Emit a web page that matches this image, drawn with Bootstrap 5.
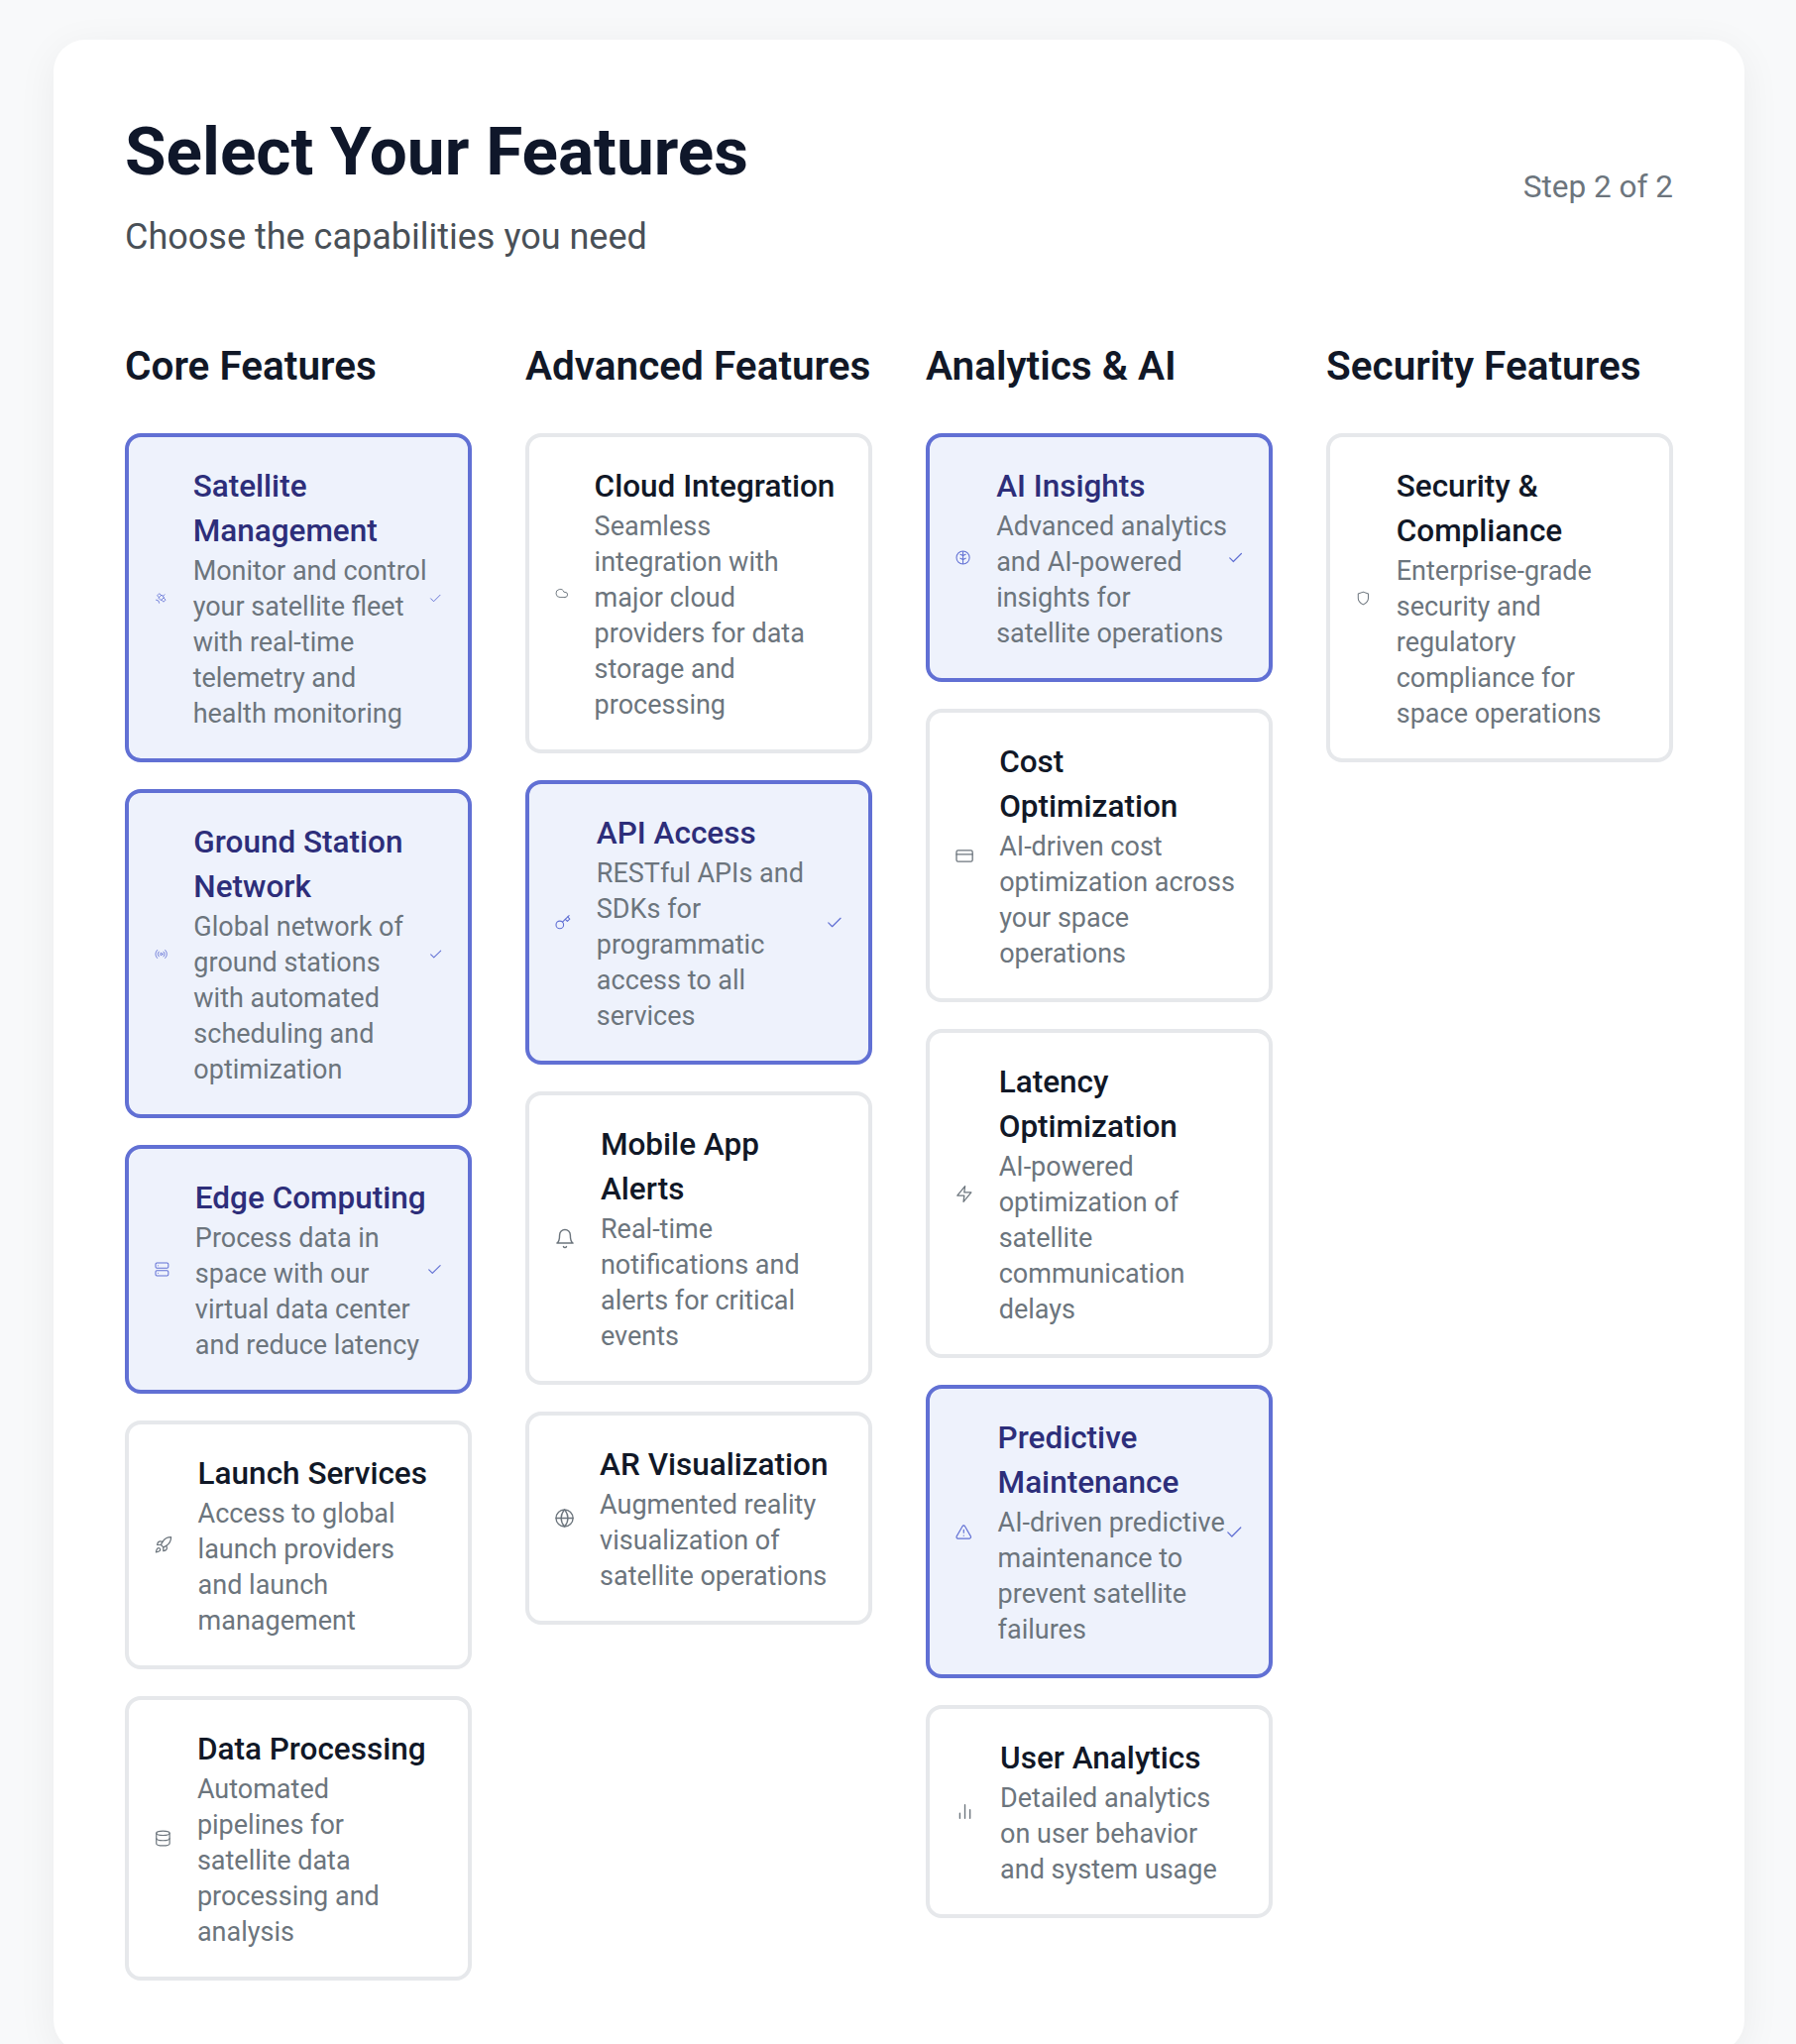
<!DOCTYPE html>
<html lang="en">
<head>
<meta charset="utf-8">
<title>Select Your Features</title>
<link href="https://cdn.jsdelivr.net/npm/bootstrap@5.3.0/dist/css/bootstrap.min.css" rel="stylesheet">
<style>
html, body { height: 2062px; overflow: hidden; }
body { background: #f8f9fa; font-family: Roboto, "Liberation Sans", sans-serif; }
.wizard-panel { margin: 40px 52px 0 54px; padding: 72px; background: #fff; border-radius: 32px; box-shadow: 0 8px 40px rgba(0,0,0,.06); }
.wizard-title { font-size: 67.5px; font-weight: 700; line-height: 81px; color: #0f172a; margin: 0 0 19px; }
.wizard-sub { font-size: 36px; line-height: 54px; color: #495057; margin: 0; }
.wizard-step { font-size: 31.5px; color: #6c757d; }
.wizard-head { margin-bottom: 79px; }
.col-title { font-size: 40.5px; font-weight: 600; line-height: 48px; color: #111827; margin: 0 0 44px; }
.wizard-cols { --bs-gutter-x: 54px; }
.gap-feat { gap: 27px; }
.feat { border: 4px solid #e6e8eb; border-radius: 16px; padding: 27px; background: #fff; }
.feat-on { border-color: #6170d4; background: #eef2fc; }
.feat-icon { width: 45px; min-width: 0; height: 45px; color: #6c757d; margin-right: 27px; }
.feat-on .feat-icon { color: #6170d4; }
.feat-check { width: 45px; min-width: 0; height: 45px; color: #6170d4; }
.feat-name { font-size: 31.5px; font-weight: 500; line-height: 45px; color: #111827; margin: 0; }
.feat-on .feat-name { color: #2d2e7a; }
.feat-desc { font-size: 27px; line-height: 36px; color: #6c757d; margin: 0; }
.ic { fill: none; stroke: currentColor; stroke-width: 1.6; stroke-linecap: round; stroke-linejoin: round; overflow: visible; }
symbol { overflow: visible; }
</style>
</head>
<body>
<svg width="0" height="0" class="position-absolute">
<defs>
<symbol id="i-sat" viewBox="2 2 20 20"><path d="M13 7 9 3 5 7l4 4"/><path d="m17 11 4 4-4 4-4-4"/><path d="m8 12 4 4 6-6-4-4Z"/><path d="m16 8 3-3"/><path d="M9 21a6 6 0 0 0-6-6"/></symbol>
<symbol id="i-radio" viewBox="2 2 20 20"><path d="M4.9 19.1C1 15.2 1 8.8 4.9 4.9"/><path d="M7.8 16.2c-2.3-2.3-2.3-6.1 0-8.5"/><circle cx="12" cy="12" r="2"/><path d="M16.2 7.8c2.3 2.3 2.3 6.1 0 8.5"/><path d="M19.1 4.9C23 8.8 23 15.1 19.1 19"/></symbol>
<symbol id="i-server" viewBox="2 2 20 20"><rect x="2" y="2" width="20" height="8" rx="2"/><rect x="2" y="14" width="20" height="8" rx="2"/><path d="M6 6h.01M6 18h.01"/></symbol>
<symbol id="i-rocket" viewBox="2 2 20 20"><path d="M4.5 16.5c-1.5 1.26-2 5-2 5s3.74-.5 5-2c.71-.84.7-2.13-.09-2.91a2.18 2.18 0 0 0-2.91-.09z"/><path d="m12 15-3-3a22 22 0 0 1 2-3.95A12.88 12.88 0 0 1 22 2c0 2.72-.78 7.5-6 11a22.35 22.35 0 0 1-4 2z"/><path d="M9 12H4s.55-3.03 2-4c1.62-1.08 5 0 5 0"/><path d="M12 15v5s3.03-.55 4-2c1.08-1.62 0-5 0-5"/></symbol>
<symbol id="i-db" viewBox="2 2 20 20"><ellipse cx="12" cy="5" rx="9" ry="3"/><path d="M3 5v14a9 3 0 0 0 18 0V5"/><path d="M3 12a9 3 0 0 0 18 0"/></symbol>
<symbol id="i-cloud" viewBox="2 2 20 20"><path d="M17.5 19H9a7 7 0 1 1 6.71-9h1.79a4.5 4.5 0 1 1 0 9Z"/></symbol>
<symbol id="i-key" viewBox="2 2 20 20"><circle cx="7.5" cy="15.5" r="5.5"/><path d="m21 2-9.6 9.6"/><path d="m15.5 7.5 3 3L22 7l-3-3"/></symbol>
<symbol id="i-bell" viewBox="2 2 20 20"><path d="M6 8a6 6 0 0 1 12 0c0 7 3 9 3 9H3s3-2 3-9"/><path d="M10.3 21a1.94 1.94 0 0 0 3.4 0"/></symbol>
<symbol id="i-globe" viewBox="2 2 20 20"><circle cx="12" cy="12" r="10"/><path d="M2 12h20"/><path d="M12 2a15.3 15.3 0 0 1 4 10 15.3 15.3 0 0 1-4 10 15.3 15.3 0 0 1-4-10 15.3 15.3 0 0 1 4-10z"/></symbol>
<symbol id="i-brain" viewBox="2 2 20 20"><circle cx="12" cy="12" r="10"/><path d="M12 3v18"/><path d="M12 9 8 7M12 9l4-2M12 15l-4-2M12 15l4-2"/></symbol>
<symbol id="i-card" viewBox="2 2 20 20"><rect x="2" y="5" width="20" height="14" rx="2"/><path d="M2 10h20"/></symbol>
<symbol id="i-zap" viewBox="2 2 20 20"><path d="M13 2 3 14h9l-1 8 10-12h-9l1-8z"/></symbol>
<symbol id="i-alert" viewBox="2 2 20 20"><path d="m21.73 18-8-14a2 2 0 0 0-3.48 0l-8 14A2 2 0 0 0 4 21h16a2 2 0 0 0 1.73-3Z"/><path d="M12 9v4M12 17h.01"/></symbol>
<symbol id="i-bars" viewBox="2 2 20 20"><path d="M18 20V10M12 20V4M6 20v-6"/></symbol>
<symbol id="i-shield" viewBox="2 2 20 20"><path d="M12 22s8-4 8-10V5l-8-3-8 3v7c0 6 8 10 8 10z"/></symbol>
<symbol id="i-check" viewBox="3 2.5 18 18"><path d="M20 6 9 17l-5-5"/></symbol>
</defs>
</svg>

<main class="wizard-panel">
  <header class="wizard-head d-flex justify-content-between align-items-center">
    <div>
      <h1 class="wizard-title">Select Your Features</h1>
      <p class="wizard-sub">Choose the capabilities you need</p>
    </div>
    <span class="wizard-step">Step 2 of 2</span>
  </header>

  <div class="row wizard-cols">
    <section class="col-3">
      <h2 class="col-title">Core Features</h2>
      <div class="d-flex flex-column gap-feat">
        <div class="feat feat-on d-flex align-items-center"><svg class="feat-icon ic"><use href="#i-sat"/></svg><div><h3 class="feat-name">Satellite Management</h3><p class="feat-desc">Monitor and control your satellite fleet with real-time telemetry and health monitoring</p></div><svg class="feat-check ic"><use href="#i-check"/></svg></div>
        <div class="feat feat-on d-flex align-items-center"><svg class="feat-icon ic"><use href="#i-radio"/></svg><div><h3 class="feat-name">Ground Station Network</h3><p class="feat-desc">Global network of ground stations with automated scheduling and optimization</p></div><svg class="feat-check ic"><use href="#i-check"/></svg></div>
        <div class="feat feat-on d-flex align-items-center"><svg class="feat-icon ic"><use href="#i-server"/></svg><div><h3 class="feat-name">Edge Computing</h3><p class="feat-desc">Process data in space with our virtual data center and reduce latency</p></div><svg class="feat-check ic"><use href="#i-check"/></svg></div>
        <div class="feat d-flex align-items-center"><svg class="feat-icon ic"><use href="#i-rocket"/></svg><div><h3 class="feat-name">Launch Services</h3><p class="feat-desc">Access to global launch providers and launch management</p></div></div>
        <div class="feat d-flex align-items-center"><svg class="feat-icon ic"><use href="#i-db"/></svg><div><h3 class="feat-name">Data Processing</h3><p class="feat-desc">Automated pipelines for satellite data processing and analysis</p></div></div>
      </div>
    </section>
    <section class="col-3">
      <h2 class="col-title">Advanced Features</h2>
      <div class="d-flex flex-column gap-feat">
        <div class="feat d-flex align-items-center"><svg class="feat-icon ic"><use href="#i-cloud"/></svg><div><h3 class="feat-name">Cloud Integration</h3><p class="feat-desc">Seamless integration with major cloud providers for data storage and processing</p></div></div>
        <div class="feat feat-on d-flex align-items-center"><svg class="feat-icon ic"><use href="#i-key"/></svg><div><h3 class="feat-name">API Access</h3><p class="feat-desc">RESTful APIs and SDKs for programmatic access to all services</p></div><svg class="feat-check ic"><use href="#i-check"/></svg></div>
        <div class="feat d-flex align-items-center"><svg class="feat-icon ic"><use href="#i-bell"/></svg><div><h3 class="feat-name">Mobile App Alerts</h3><p class="feat-desc">Real-time notifications and alerts for critical events</p></div></div>
        <div class="feat d-flex align-items-center"><svg class="feat-icon ic"><use href="#i-globe"/></svg><div><h3 class="feat-name">AR Visualization</h3><p class="feat-desc">Augmented reality visualization of satellite operations</p></div></div>
      </div>
    </section>
    <section class="col-3">
      <h2 class="col-title">Analytics &amp; AI</h2>
      <div class="d-flex flex-column gap-feat">
        <div class="feat feat-on d-flex align-items-center"><svg class="feat-icon ic"><use href="#i-brain"/></svg><div><h3 class="feat-name">AI Insights</h3><p class="feat-desc">Advanced analytics and AI-powered insights for satellite operations</p></div><svg class="feat-check ic"><use href="#i-check"/></svg></div>
        <div class="feat d-flex align-items-center"><svg class="feat-icon ic"><use href="#i-card"/></svg><div><h3 class="feat-name">Cost Optimization</h3><p class="feat-desc">AI-driven cost optimization across your space operations</p></div></div>
        <div class="feat d-flex align-items-center"><svg class="feat-icon ic"><use href="#i-zap"/></svg><div><h3 class="feat-name">Latency Optimization</h3><p class="feat-desc">AI-powered optimization of satellite communication delays</p></div></div>
        <div class="feat feat-on d-flex align-items-center"><svg class="feat-icon ic"><use href="#i-alert"/></svg><div><h3 class="feat-name">Predictive Maintenance</h3><p class="feat-desc">AI-driven predictive maintenance to prevent satellite failures</p></div><svg class="feat-check ic"><use href="#i-check"/></svg></div>
        <div class="feat d-flex align-items-center"><svg class="feat-icon ic"><use href="#i-bars"/></svg><div><h3 class="feat-name">User Analytics</h3><p class="feat-desc">Detailed analytics on user behavior and system usage</p></div></div>
      </div>
    </section>
    <section class="col-3">
      <h2 class="col-title">Security Features</h2>
      <div class="d-flex flex-column gap-feat">
        <div class="feat d-flex align-items-center"><svg class="feat-icon ic"><use href="#i-shield"/></svg><div><h3 class="feat-name">Security &amp; Compliance</h3><p class="feat-desc">Enterprise-grade security and regulatory compliance for space operations</p></div></div>
      </div>
    </section>
  </div>
</main>
</body>
</html>
